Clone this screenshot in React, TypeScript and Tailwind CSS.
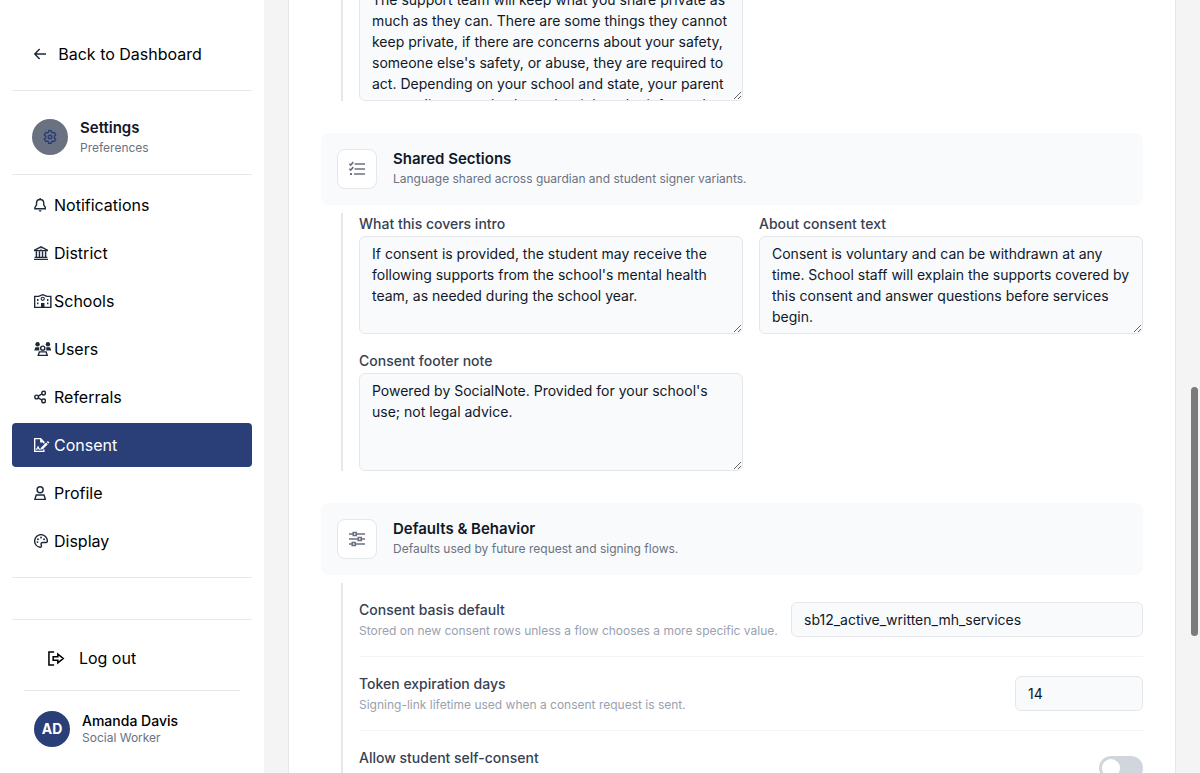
import { useState } from 'react';
import type { ReactNode } from 'react';
import clsx from 'clsx';

interface IconProps {
  className?: string;
}

interface GlyphProps extends IconProps {
  width?: number;
  children: ReactNode;
}

// Shared frame for the sharp outline icons, drawn on a 512-unit tall grid
function Glyph({ width = 512, className = 'h-[14px]', children }: GlyphProps) {
  return (
    <svg
      viewBox={`0 0 ${width} 512`}
      className={clsx('w-auto shrink-0', className)}
      fill="none"
      stroke="currentColor"
      strokeWidth="52"
      aria-hidden="true"
    >
      {children}
    </svg>
  );
}

function ArrowLeftIcon() {
  return (
    <Glyph width={448}>
      <path d="M24 256H448M206 74L30 256l176 182" />
    </Glyph>
  );
}

function GearIcon() {
  return (
    <Glyph>
      <path d="M209 26h94l14 62 40 23 61-19 47 82-47 43v78l47 43-47 82-61-19-40 23-14 62h-94l-14-62-40-23-61 19-47-82 47-43v-78l-47-43 47-82 61 19 40-23z" />
      <circle cx="256" cy="256" r="66" />
    </Glyph>
  );
}

function BellIcon() {
  return (
    <Glyph width={448}>
      <path d="M224 0v56M224 56c-80 0-132 58-132 134v62L32 352v40h384v-40l-60-100v-62c0-76-52-134-132-134z" />
      <path d="M160 448h128l-64 64z" fill="currentColor" stroke="none" />
    </Glyph>
  );
}

function LandmarkIcon() {
  return (
    <Glyph>
      <path d="M24 150L256 32l232 118v18H24z" />
      <path d="M88 192v208M200 192v208M312 192v208M424 192v208M24 416h464M0 488h512" />
      <circle cx="256" cy="116" r="22" fill="currentColor" stroke="none" />
    </Glyph>
  );
}

function SchoolIcon() {
  return (
    <Glyph width={640}>
      <path d="M24 88h144L320 26l152 62h144v400H24z" />
      <circle cx="320" cy="176" r="58" strokeWidth="42" />
      <path d="M256 488V330h128v158z" fill="currentColor" stroke="none" />
      <path d="M112 184h52v68h-52zM112 308h52v68h-52zM476 184h52v68h-52zM476 308h52v68h-52z" fill="currentColor" stroke="none" />
    </Glyph>
  );
}

function UsersIcon() {
  return (
    <Glyph width={640}>
      <g fill="currentColor" stroke="none">
        <circle cx="130" cy="80" r="80" />
        <circle cx="510" cy="80" r="80" />
        <path d="M50 192h142v120H10zM448 192h142l40 120H448z" />
      </g>
      <circle cx="320" cy="228" r="76" />
      <path d="M198 360h244l42 128H156z" />
    </Glyph>
  );
}

function ShareNodesIcon() {
  return (
    <Glyph width={448}>
      <circle cx="96" cy="256" r="68" />
      <circle cx="352" cy="112" r="68" />
      <circle cx="352" cy="400" r="68" />
      <path d="M156 222l136-76M156 290l136 76" />
    </Glyph>
  );
}

function FileSignatureIcon() {
  return (
    <Glyph width={576}>
      <path d="M360 424v64H24V24h216l120 120v60" />
      <path d="M224 24v136h136z" fill="currentColor" stroke="none" />
      <path d="M72 408h34l42-84 40 84h60" strokeWidth="40" />
      <path d="M248 424l16-76 180-180 60 60-180 180z" fill="currentColor" stroke="none" />
      <path d="M468 144l36-36 60 60-36 36z" fill="currentColor" stroke="none" />
    </Glyph>
  );
}

function UserIcon() {
  return (
    <Glyph width={448}>
      <circle cx="224" cy="136" r="110" />
      <path d="M82 328h284l50 160H32z" />
    </Glyph>
  );
}

function PaletteIcon() {
  return (
    <Glyph>
      <path d="M488 256c0-128-104-232-232-232S24 128 24 256c0 116 84 212 196 230 30 4 54-20 54-50 0-24-18-44-18-68 0-36 28-60 64-60h130c22 0 38-20 38-52z" />
      <g fill="currentColor" stroke="none">
        <circle cx="144" cy="192" r="34" />
        <circle cx="256" cy="128" r="34" />
        <circle cx="368" cy="192" r="34" />
        <circle cx="128" cy="296" r="34" />
      </g>
    </Glyph>
  );
}

function LogoutIcon() {
  return (
    <Glyph width={576} className="h-[15px]">
      <path d="M208 32H32v448h176" />
      <path d="M176 196h160v-92l184 152-184 152v-92H176z" />
    </Glyph>
  );
}

function ListCheckIcon() {
  return (
    <Glyph className="h-4">
      <path d="M180 96h332M180 256h332M160 416h352" />
      <path d="M10 88l44 44 84-96M10 248l44 44 84-96" />
      <path d="M32 384h64v64H32z" fill="currentColor" stroke="none" />
    </Glyph>
  );
}

function SlidersIcon() {
  return (
    <Glyph className="h-4">
      <path d="M0 96h128M240 96h272M0 256h288M400 256h112M0 416h96M208 416h304" />
      <path d="M136 48h96v96h-96zM296 208h96v96h-96zM104 368h96v96h-96z" />
    </Glyph>
  );
}

const NAV_ITEMS = [
  { id: 'notifications', label: 'Notifications', icon: <BellIcon /> },
  { id: 'district', label: 'District', icon: <LandmarkIcon /> },
  { id: 'schools', label: 'Schools', icon: <SchoolIcon /> },
  { id: 'users', label: 'Users', icon: <UsersIcon /> },
  { id: 'referrals', label: 'Referrals', icon: <ShareNodesIcon /> },
  { id: 'consent', label: 'Consent', icon: <FileSignatureIcon /> },
  { id: 'profile', label: 'Profile', icon: <UserIcon /> },
  { id: 'display', label: 'Display', icon: <PaletteIcon /> },
];

function Sidebar() {
  const [active, setActive] = useState('consent');

  return (
    <aside className="flex w-[264px] shrink-0 flex-col bg-white px-3 text-base text-black">
      <div className="border-b border-gray-200 pt-9 pb-[18px]">
        <a href="#dashboard" className="flex h-9 items-center gap-3 pl-[22px]">
          <span className="text-gray-800">
            <ArrowLeftIcon />
          </span>
          Back to Dashboard
        </a>
      </div>

      <div className="flex h-[84px] items-center gap-3 border-b border-gray-200 pt-2 pl-5">
        <span className="flex size-9 items-center justify-center rounded-full bg-gray-500 text-[#2a3f77]">
          <GearIcon />
        </span>
        <div className="pt-[2px]">
          <h1 className="text-[15px] leading-5 font-semibold text-gray-900">Settings</h1>
          <p className="text-xs leading-5 text-gray-500">Preferences</p>
        </div>
      </div>

      <nav className="flex flex-col gap-1 border-b border-gray-200 pt-2 pb-[14px]">
        {NAV_ITEMS.map((item) => (
          <a
            key={item.id}
            href={`#${item.id}`}
            onClick={() => setActive(item.id)}
            className={clsx(
              'flex h-11 items-center rounded pl-[22px]',
              item.id === active && 'bg-[#2a3f77] text-white'
            )}
          >
            <span className={clsx('w-5 shrink-0', item.id !== active && 'text-gray-800')}>{item.icon}</span>
            {item.label}
          </a>
        ))}
      </nav>

      <div className="mt-[41px] border-t border-gray-200 px-3 pt-4">
        <button type="button" className="mb-[10px] flex h-11 w-full items-center gap-[14px] pl-6">
          <LogoutIcon />
          Log out
        </button>
        <div className="flex items-center gap-3 border-t border-gray-200 pt-5 pl-[10px]">
          <span className="flex size-9 items-center justify-center rounded-full bg-[#2a3f77] text-sm font-bold text-white">
            AD
          </span>
          <div>
            <p className="text-sm leading-[18px] font-medium text-black">Amanda Davis</p>
            <p className="text-xs leading-4 text-gray-500">Social Worker</p>
          </div>
        </div>
      </div>
    </aside>
  );
}

interface SectionHeaderProps {
  icon: ReactNode;
  title: string;
  description: string;
}

function SectionHeader({ icon, title, description }: SectionHeaderProps) {
  return (
    <header className="flex h-[72px] items-center gap-4 rounded-lg bg-[#f9fafc] px-4">
      <span className="flex size-10 items-center justify-center rounded-lg border border-gray-200 bg-white text-gray-500">
        {icon}
      </span>
      <div>
        <h2 className="text-[15px] leading-5 font-semibold text-gray-900">{title}</h2>
        <p className="text-xs leading-5 text-gray-500">{description}</p>
      </div>
    </header>
  );
}

interface TextAreaFieldProps {
  id: string;
  label: string;
  text: string;
}

function TextAreaField({ id, label, text }: TextAreaFieldProps) {
  return (
    <div className="flex flex-col gap-[2px]">
      <label htmlFor={id} className="text-sm leading-[21px] font-medium text-gray-700">
        {label}
      </label>
      <textarea
        id={id}
        rows={4}
        defaultValue={text}
        className="block w-full overflow-hidden rounded-md border border-gray-200 bg-[#f8fafc] px-3 py-[6px] text-sm leading-[21px] text-gray-900"
      />
    </div>
  );
}

interface SettingRowProps {
  id: string;
  label: string;
  hint?: string;
  children: ReactNode;
}

function SettingRow({ id, label, hint, children }: SettingRowProps) {
  return (
    <div className="flex items-center justify-between gap-3 border-b border-gray-100 py-4">
      <div className="min-h-[41px]">
        <label htmlFor={id} className="block text-sm leading-[21px] font-medium text-gray-700">
          {label}
        </label>
        {hint && <p className="pt-[2px] text-xs leading-[18px] text-gray-400">{hint}</p>}
      </div>
      {children}
    </div>
  );
}

export default function App() {
  const [selfConsent, setSelfConsent] = useState(false);

  return (
    <div className="relative flex h-screen overflow-hidden bg-[#f4f4f4] font-['Inter',sans-serif]">
      <Sidebar />

      <main className="min-w-0 flex-1 overflow-hidden px-6">
        <div className="-mt-[18px] flex flex-col gap-8 border-x border-gray-200 bg-white px-8 pb-8">
          <section className="ml-5 grid grid-cols-2 gap-4 border-l-2 border-gray-200 pl-4">
            <textarea
              aria-label="Privacy text"
              rows={5}
              defaultValue="The support team will keep what you share private as much as they can. There are some things they cannot keep private, if there are concerns about your safety, someone else's safety, or abuse, they are required to act. Depending on your school and state, your parent or guardian may also have the right to be informed"
              className="block w-full overflow-hidden rounded-md border border-gray-200 bg-[#f8fafc] px-3 py-[6px] text-sm leading-[21px] text-gray-900"
            />
          </section>

          <section>
            <SectionHeader
              icon={<ListCheckIcon />}
              title="Shared Sections"
              description="Language shared across guardian and student signer variants."
            />
            <div className="mt-2 ml-5 grid grid-cols-2 gap-4 border-l-2 border-gray-200 pl-4">
              <TextAreaField
                id="covers-intro"
                label="What this covers intro"
                text="If consent is provided, the student may receive the following supports from the school's mental health team, as needed during the school year."
              />
              <TextAreaField
                id="about-consent"
                label="About consent text"
                text="Consent is voluntary and can be withdrawn at any time. School staff will explain the supports covered by this consent and answer questions before services begin."
              />
              <TextAreaField
                id="footer-note"
                label="Consent footer note"
                text="Powered by SocialNote. Provided for your school's use; not legal advice."
              />
            </div>
          </section>

          <section>
            <SectionHeader
              icon={<SlidersIcon />}
              title="Defaults & Behavior"
              description="Defaults used by future request and signing flows."
            />
            <div className="mt-2 ml-5 border-l-2 border-gray-200 pl-4">
              <SettingRow
                id="consent-basis"
                label="Consent basis default"
                hint="Stored on new consent rows unless a flow chooses a more specific value."
              >
                <input
                  id="consent-basis"
                  type="text"
                  defaultValue="sb12_active_written_mh_services"
                  className="w-[352px] shrink-0 rounded-md border border-gray-200 bg-[#f8fafc] px-3 py-[6px] text-sm leading-[21px] text-gray-900"
                />
              </SettingRow>
              <SettingRow
                id="token-days"
                label="Token expiration days"
                hint="Signing-link lifetime used when a consent request is sent."
              >
                <input
                  id="token-days"
                  type="text"
                  inputMode="numeric"
                  defaultValue="14"
                  className="w-32 shrink-0 rounded-md border border-gray-200 bg-[#f8fafc] px-3 py-[6px] text-sm leading-[21px] text-gray-900"
                />
              </SettingRow>
              <SettingRow id="self-consent" label="Allow student self-consent">
                <input
                  id="self-consent"
                  type="checkbox"
                  role="switch"
                  checked={selfConsent}
                  onChange={(e) => setSelfConsent(e.target.checked)}
                  className="flex h-6 w-11 shrink-0 cursor-pointer appearance-none items-center rounded-full bg-gray-300 px-[3px] before:size-[18px] before:rounded-full before:bg-white checked:justify-end checked:bg-[#2a3f77]"
                />
              </SettingRow>
            </div>
          </section>
        </div>
      </main>

      {/* Scroll thumb floating over the page edge */}
      <div className="absolute top-1/2 right-[2px] h-[249px] w-[7px] rounded-full bg-[#7b7b7b]" />
    </div>
  );
}
